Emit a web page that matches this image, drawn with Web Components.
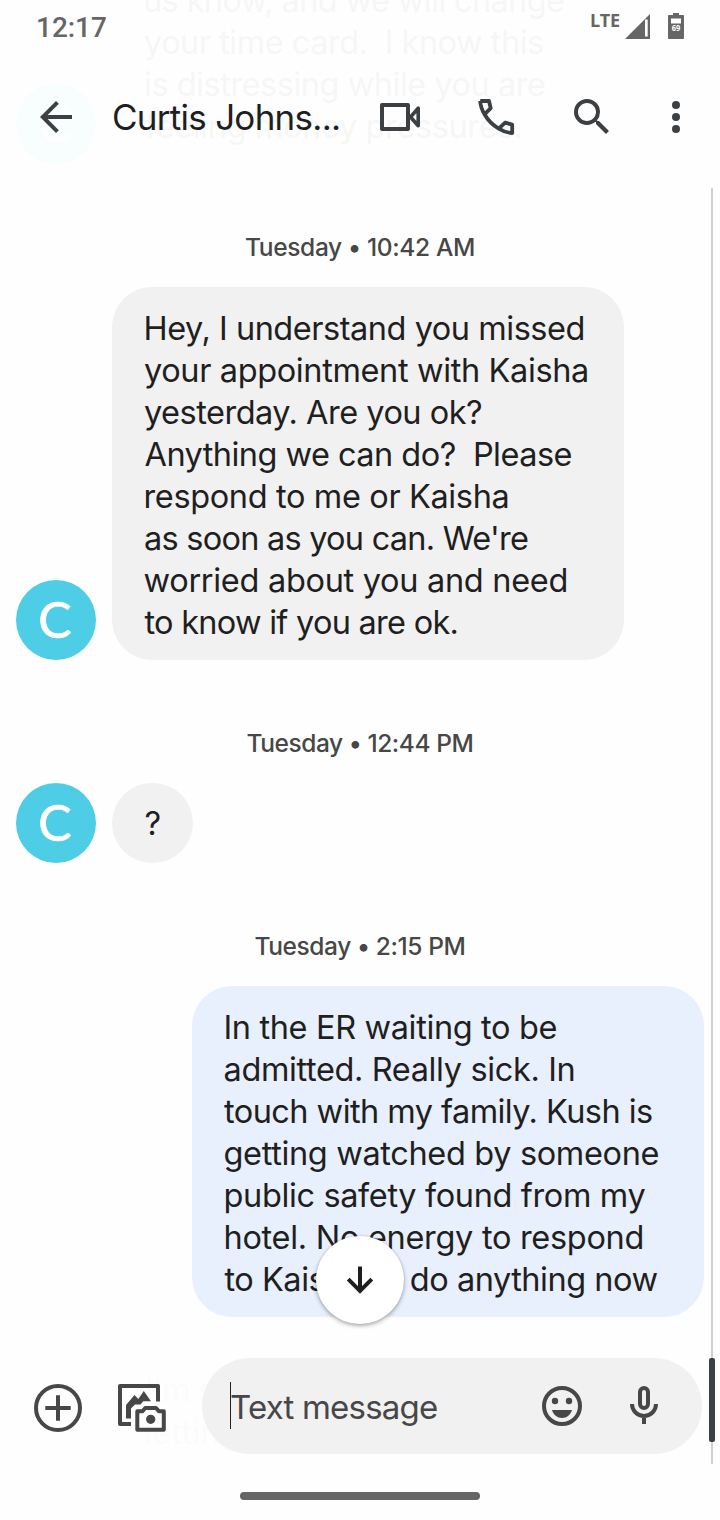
<!DOCTYPE html>
<html lang="en">
<head>
<meta charset="utf-8">
<title>Messages</title>
<style>
html,body{margin:0;padding:0;background:#fefefe}
body{width:720px;height:1520px;overflow:hidden;font-family:Inter,Roboto,"Liberation Sans",sans-serif}
</style>
</head>
<body>
<chat-screen></chat-screen>
<script>
const pen = document.createElement('canvas').getContext('2d');
function define(name, html, after) {
  const t = document.createElement('template');
  t.innerHTML = html;
  customElements.define(name, class extends HTMLElement {
    constructor() {
      super();
      this.attachShadow({ mode: 'open' }).appendChild(t.content.cloneNode(true));
    }
    connectedCallback() { if (after) after(this); }
  });
}

/* One line of text whose glyphs span exactly `ink` pixels; `dx` shifts the first glyph. */
define('ink-line', `<style>:host{display:block;white-space:pre}span{display:inline-block}</style><span><slot></slot></span>`, el => {
  const cs = getComputedStyle(el), text = el.textContent;
  pen.font = `${cs.fontWeight} ${cs.fontSize} ${cs.fontFamily}`;
  const m = pen.measureText(text), left = m.actualBoundingBoxLeft;
  const ink = m.actualBoundingBoxRight + m.actualBoundingBoxLeft;
  const ls = (Number(el.getAttribute('ink')) - ink) / (text.length - 1);
  const span = el.shadowRoot.querySelector('span');
  span.style.letterSpacing = ls + 'px';
  span.style.marginLeft = (left + Number(el.getAttribute('dx') || 0)) + 'px';
  span.style.marginRight = -(ls + m.width - m.actualBoundingBoxRight) + 'px';
});

define('contact-avatar', `<style>:host{display:flex;flex:none;width:80px;height:80px;border-radius:50%;background:#4ecde6;color:#fff;
  align-items:center;justify-content:center;font:400 50px/80px Lato,sans-serif}span{position:relative;top:-1px;left:-1px;-webkit-text-stroke:.7px #fff}</style><span>C</span>`);

define('chat-message', `<style>
:host{display:flex;align-items:flex-end;gap:16px;padding:0 16px;flex:none}
.b{box-sizing:border-box;width:512px;padding:21px 32px 16px;border-radius:40px;background:#f1f1f1;color:#1f1f1f;font-size:32.500px;line-height:42px}
:host([short]) .b{width:81px;padding:20px 32px 18px}
:host([sent]){justify-content:flex-end}
:host([sent]) .b{background:#e8effd}
:host([sent]) contact-avatar{display:none}
:host([grouped]) contact-avatar{visibility:hidden}
</style><contact-avatar></contact-avatar><div class="b"><slot></slot></div>`);

define('date-label', `<style>:host{display:flex;flex:none;justify-content:center;height:30px;color:#474747;font-size:24.500px;font-weight:500;line-height:30px}</style><slot></slot>`);

define('status-bar', `<style>
:host{display:flex;height:54px;color:#666;padding:0 36px 0 38px;align-items:flex-start}
.t{font:500 28px/33px Roboto,sans-serif;margin-top:10.5px;flex:1}
.l{font:700 18px/20px "Open Sans",sans-serif;margin:10px 5px 0 0}
.s{margin-right:18px}svg{display:block;margin-top:13px}
</style>
<div class="t"><ink-line ink="68">12:17</ink-line></div>
<div class="l"><ink-line ink="29">LTE</ink-line></div>
<svg class="s" width="25" height="26" viewBox="0 0 25 26"><path fill="#666" fill-rule="evenodd" d="M25 1v25H0zM20 6.500v17h2.700V6.500z"/></svg>
<svg width="16" height="26" viewBox="0 0 16 26"><path fill="#666" fill-rule="evenodd" d="M5 0h6v2h4a1 1 0 0 1 1 1v22a1 1 0 0 1-1 1H1a1 1 0 0 1-1-1V3a1 1 0 0 1 1-1h4zM3 5.5v5h10v-5z"/><text x="8" y="17.8" text-anchor="middle" font-family="Open Sans" font-weight="700" font-size="9" textLength="8.6" lengthAdjust="spacingAndGlyphs" fill="#fff">69</text></svg>`);

define('chat-header', `<style>
:host{display:block;position:absolute;left:0;top:0;width:720px;height:188px;background:rgba(254,254,254,.965)}
.r{display:flex;align-items:center;height:126px;padding:0 20px 0 32px;color:#3c4043}
.n{width:267px;margin-left:33px;color:#1f1f1f;font-size:35px;line-height:42px;margin-top:-1px}
svg{display:block;flex:none;width:48px;height:48px;fill:currentColor}
</style><status-bar></status-bar>
<div class="r">
<svg viewBox="0 0 24 24"><path d="M20 11H7.83l5.59-5.59L12 4l-8 8 8 8 1.41-1.41L7.83 13H20z"/></svg>
<div class="n"><ink-line ink="225" dx="1">Curtis Johns...</ink-line></div>
<svg viewBox="376 93 48 48" style="margin-left:-4px"><g fill="none" stroke="currentColor" stroke-width="4" stroke-linejoin="round"><rect x="382" y="105" width="26" height="24"/><path stroke-width="3.6" d="M410.5 117l7.7-8.8v17.6z"/></g></svg>
<svg viewBox="472 93 48 48" style="margin-left:48px"><path fill="none" stroke="currentColor" stroke-width="3.8" stroke-linejoin="round" d="M480.2 101h8.8l1.7 7.2-6.2 6.1C482 110 480.400 105.500 480.200 101M484.500 114.300C488 120.500 492.500 125 498.700 128.600L505.200 122.600 512.200 124.600V133C507.500 132.800 503 131.300 498.700 128.600"/></svg>
<svg viewBox="0 0 24 24" style="margin-left:48px"><path d="M15.500 14h-.79l-.28-.27A6.470 6.470 0 0 0 16 9.500 6.500 6.500 0 1 0 9.500 16c1.610 0 3.090-.59 4.230-1.570l.27.28v.79l5 4.990L20.490 19l-4.990-5zm-6 0C7.010 14 5 11.990 5 9.500S7.010 5 9.500 5 14 7.010 14 9.500 11.990 14 9.500 14z"/></svg>
<svg viewBox="0 0 24 24" style="margin-left:36px"><circle cx="12" cy="6" r="2"/><circle cx="12" cy="12" r="2"/><circle cx="12" cy="18" r="2"/></svg>
</div>`);

define('compose-bar', `<style>
:host{display:block;position:absolute;left:0;top:1337px;width:720px;height:183px;background:rgba(254,254,254,.99)}
.r{display:flex;align-items:center;padding:21px 18px 0 34px;color:#474747}
.p{box-sizing:border-box;display:flex;align-items:center;width:500px;height:96px;border-radius:48px;background:#f1f1f1;margin-left:36px;padding:0 34px 0 28px}
.c{width:1px;height:47px;background:#222;margin-top:-1px}
.x{flex:1;font-size:33px;line-height:44px;margin-top:1px}
.h{width:240px;height:8px;border-radius:4px;background:#666;margin:38px auto 0}
svg{display:block;flex:none}
</style><div class="r">
<svg width="48" height="48" style="margin-top:4px" viewBox="0 0 48 48" fill="none" stroke="currentColor" stroke-width="4"><circle cx="24" cy="24" r="22"/><path d="M24 11.300v25.400M11.300 24h25.400"/></svg>
<svg width="48" height="48" style="margin:4px 0 0 36px" viewBox="118 1384 48 48" fill="none" stroke="currentColor" stroke-width="4" stroke-linejoin="round"><path d="M158 1401.500V1386H120V1424H131"/><path fill="currentColor" stroke="none" d="M126 1418.500V1405L134.500 1395 138.300 1399 143.800 1391 151 1401.200H143.300L140.500 1404.500H135L131 1408.500V1418.500z"/><path d="M137.300 1411.300H142.300L145.300 1408H156L159 1411.300H163.800V1429.700H137.300z"/><circle cx="150.700" cy="1419.300" r="4.600" fill="currentColor" stroke="none"/></svg>
<div class="p"><div class="c"></div><div class="x"><ink-line ink="206">Text message</ink-line></div>
<svg width="40" height="40" viewBox="0 0 40 40" fill="currentColor"><circle cx="20" cy="20" r="18" fill="none" stroke="currentColor" stroke-width="4"/><circle cx="13" cy="15" r="3.200"/><circle cx="27" cy="15" r="3.200"/><path d="M10 24h20c-1.400 4.800-5.300 8-10 8s-8.600-3.200-10-8z"/></svg>
<svg width="48" height="40" style="margin-left:38px" viewBox="620 1386 48 40" fill="none" stroke="currentColor" stroke-width="4"><rect x="640" y="1388" width="8" height="20" rx="4"/><path d="M632 1404a12 12 0 0 0 24 0M644 1416v8"/></svg>
</div></div><div class="h"></div>`);

define('jump-button', `<style>:host{position:absolute;left:316px;top:1236px;width:88px;height:88px;border-radius:50%;background:#fff;box-shadow:0 2px 4px rgba(0,0,0,.3),0 0 3px rgba(0,0,0,.12);display:flex;align-items:center;justify-content:center}</style>
<svg width="28" height="28" viewBox="0 0 28 28" fill="none" stroke="#1f1f1f" stroke-width="4"><path d="M14 .5V25M2.200 13.200L14 25 25.800 13.200"/></svg>`);

define('scroll-track', `<style>:host{display:block;position:absolute;left:709px;top:188px;width:6px;height:1276px;background:linear-gradient(#cfd0d1,#cfd0d1) 2px 0/2px 100% no-repeat}
div{height:84px;border-radius:2px;background:#3c4043;position:relative;top:1170px}</style><div></div>`);

define('chat-screen', `<style>
:host{display:block;position:relative;width:720px;height:1520px;overflow:hidden;background:#fefefe}
main{display:flex;flex-direction:column;height:1520px;box-sizing:border-box}
</style>
<main>
<chat-message style="margin-top:-41px"><ink-line ink="419" dx="1">us know, and we will change</ink-line><ink-line ink="399">your time card.  I know this</ink-line><ink-line ink="400" dx="1">is distressing while you are</ink-line><ink-line ink="376" dx="1">feeling money pressures.</ink-line></chat-message>
<date-label style="margin:68px 0 25px"><ink-line ink="228">Tuesday • 10:42 AM</ink-line></date-label>
<chat-message><ink-line ink="438" dx="1.5">Hey, I understand you missed</ink-line><ink-line ink="443">your appointment with Kaisha</ink-line><ink-line ink="337">yesterday. Are you ok?</ink-line><ink-line ink="427" dx=".5">Anything we can do?  Please</ink-line><ink-line ink="362" dx="1.5">respond to me or Kaisha</ink-line><ink-line ink="383" dx="1">as soon as you can. We're</ink-line><ink-line ink="422" dx=".5">worried about you and need</ink-line><ink-line ink="312" dx=".5">to know if you are ok.</ink-line></chat-message>
<date-label style="margin:68px 0 25px"><ink-line ink="225">Tuesday • 12:44 PM</ink-line></date-label>
<chat-message short><ink-line ink="14" dx="1.5">?</ink-line></chat-message>
<date-label style="margin:68px 0 25px"><ink-line ink="209">Tuesday • 2:15 PM</ink-line></date-label>
<chat-message sent><ink-line ink="331" dx="1.5">In the ER waiting to be</ink-line><ink-line ink="349" dx=".5">admitted. Really sick. In</ink-line><ink-line ink="428">touch with my family. Kush is</ink-line><ink-line ink="434" dx=".5">getting watched by someone</ink-line><ink-line ink="420" dx="1.5">public safety found from my</ink-line><ink-line ink="417" dx="1.5">hotel. No energy to respond</ink-line><ink-line ink="433" dx=".5">to Kaisha or do anything now</ink-line></chat-message>
<chat-message grouped style="margin-top:32px"><ink-line ink="98" dx="3">I'm still</ink-line><ink-line ink="92" dx="2">letting</ink-line></chat-message>
</main>
<chat-header></chat-header>
<compose-bar></compose-bar>
<scroll-track></scroll-track>
<jump-button></jump-button>`);
</script>
</body>
</html>
